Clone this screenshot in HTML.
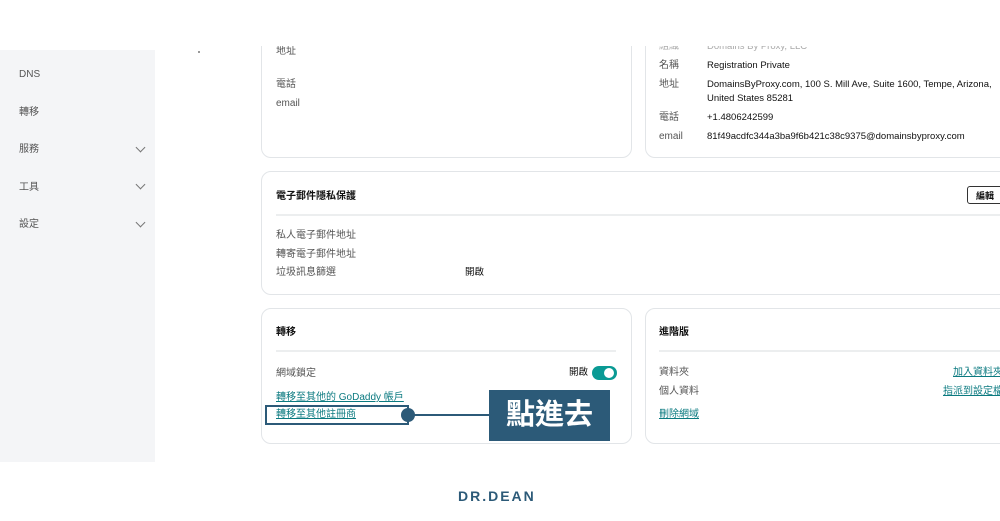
<!DOCTYPE html><html><head><meta charset="utf-8"><style>
body{margin:0;width:1000px;height:521px;overflow:hidden;background:#fff;font-family:"Liberation Sans","Noto Sans CJK TC",sans-serif;position:relative;color:#111}
.a{position:absolute;white-space:nowrap;line-height:13px}
.card{position:absolute;border:1px solid #e2e5e8;border-radius:10px;background:#fff}
.s{font-size:10px;color:#555}
.d{font-size:9.5px;color:#111}
.t{font-size:10px;font-weight:bold;color:#111}
.hr{position:absolute;height:2px;background:#eceeef}
.l{font-size:10px;color:#0b7a80;text-decoration:underline}
.chev{position:absolute;width:6px;height:6px;border-right:1.3px solid #777;border-bottom:1.3px solid #777;transform:rotate(45deg)}
</style></head><body>
<div class="a" style="left:0;top:50px;width:155px;height:412px;background:#f4f5f7"></div>
<div class="a s" style="left:19px;top:68px">DNS</div>
<div class="a s" style="left:19px;top:106px">轉移</div>
<div class="a s" style="left:19px;top:143px">服務</div>
<div class="a s" style="left:19px;top:181px">工具</div>
<div class="a s" style="left:19px;top:218px">設定</div>
<div class="chev" style="left:137px;top:144px"></div>
<div class="chev" style="left:137px;top:181px"></div>
<div class="chev" style="left:137px;top:219px"></div>
<div class="a" style="left:198px;top:51px;width:2px;height:2px;background:#999"></div>

<div class="card" style="left:261px;top:-20px;width:369px;height:176px"></div>
<div class="a s" style="left:276px;top:45px">地址</div>
<div class="a s" style="left:276px;top:78px">電話</div>
<div class="a s" style="left:276px;top:97px">email</div>

<div class="card" style="left:645px;top:-20px;width:380px;height:176px"></div>
<div class="a s" style="left:659px;top:40px;color:#aaa">組織</div>
<div class="a d" style="left:707px;top:40px;color:#aaa">Domains By Proxy, LLC</div>
<div class="a s" style="left:659px;top:59px">名稱</div>
<div class="a d" style="left:707px;top:59px">Registration Private</div>
<div class="a s" style="left:659px;top:78px">地址</div>
<div class="a d" style="left:707px;top:78px">DomainsByProxy.com, 100 S. Mill Ave, Suite 1600, Tempe, Arizona,</div>
<div class="a d" style="left:707px;top:92px">United States 85281</div>
<div class="a s" style="left:659px;top:111px">電話</div>
<div class="a d" style="left:707px;top:111px">+1.4806242599</div>
<div class="a s" style="left:659px;top:130px">email</div>
<div class="a d" style="left:707px;top:130px">81f49acdfc344a3ba9f6b421c38c9375@domainsbyproxy.com</div>
<div class="a" style="left:160px;top:0;width:840px;height:46px;background:#fff"></div>

<div class="card" style="left:261px;top:171px;width:760px;height:122px"></div>
<div class="a t" style="left:276px;top:190px">電子郵件隱私保護</div>
<div class="a" style="left:967px;top:186px;width:36px;height:18px;border:1px solid #333;border-radius:3px;font-size:9px;font-weight:bold;line-height:18px;padding-left:8px;box-sizing:border-box">編輯</div>
<div class="hr" style="left:276px;top:214px;width:724px"></div>
<div class="a s" style="left:276px;top:229px">私人電子郵件地址</div>
<div class="a s" style="left:276px;top:248px">轉寄電子郵件地址</div>
<div class="a s" style="left:276px;top:266px">垃圾訊息篩選</div>
<div class="a d" style="left:465px;top:266px">開啟</div>

<div class="card" style="left:261px;top:308px;width:369px;height:134px"></div>
<div class="a t" style="left:276px;top:326px">轉移</div>
<div class="hr" style="left:276px;top:350px;width:340px"></div>
<div class="a s" style="left:276px;top:367px">網域鎖定</div>
<div class="a d" style="left:569px;top:366px">開啟</div>
<div class="a" style="left:592px;top:366px;width:25px;height:14px;border-radius:7px;background:#0a9a94"></div>
<div class="a" style="left:604px;top:368px;width:10px;height:10px;border-radius:5px;background:#fff"></div>
<div class="a l" style="left:276px;top:391px">轉移至其他的 GoDaddy 帳戶</div>
<div class="a l" style="left:276px;top:408px">轉移至其他註冊商</div>

<div class="card" style="left:645px;top:308px;width:380px;height:134px"></div>
<div class="a t" style="left:659px;top:326px">進階版</div>
<div class="hr" style="left:659px;top:350px;width:341px"></div>
<div class="a s" style="left:659px;top:366px">資料夾</div>
<div class="a s" style="left:659px;top:385px">個人資料</div>
<div class="a l" style="left:953px;top:366px">加入資料夾</div>
<div class="a l" style="left:943px;top:385px">指派到設定檔</div>
<div class="a l" style="left:659px;top:408px">刪除網域</div>

<div class="a" style="left:265px;top:405px;width:144px;height:20px;border:2px solid #2c5a78;box-sizing:border-box"></div>
<div class="a" style="left:401px;top:408px;width:14px;height:14px;border-radius:7px;background:#2c5a78"></div>
<div class="a" style="left:412px;top:414px;width:78px;height:2px;background:#2c5a78"></div>
<div class="a" style="left:489px;top:390px;width:121px;height:51px;background:#2c5a78;color:#fff;font-size:29px;font-weight:bold;text-align:center;line-height:51px">點進去</div>

<div class="a" style="left:458px;top:488px;font-size:14px;font-weight:bold;letter-spacing:2px;color:#2c5a78;line-height:16px">DR.DEAN</div>
</body></html>
